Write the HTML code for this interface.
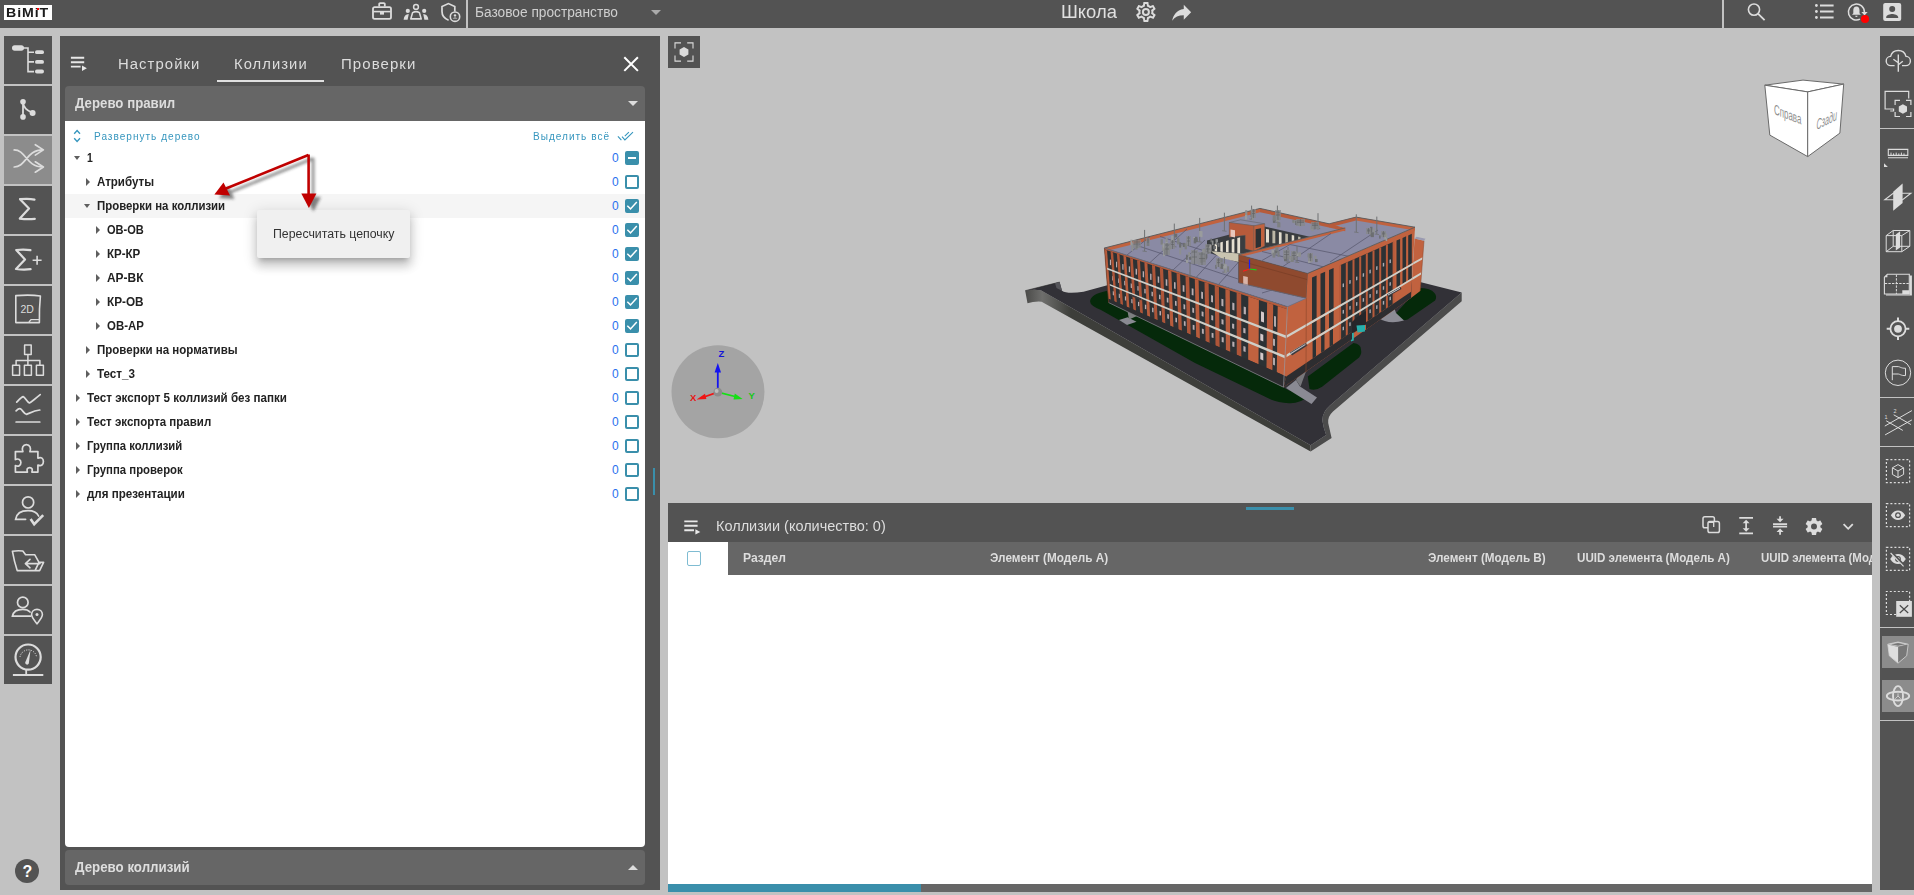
<!DOCTYPE html>
<html lang="ru">
<head>
<meta charset="utf-8">
<title>BiMiT — Школа</title>
<style>
*{box-sizing:border-box;margin:0;padding:0}
html,body{width:1914px;height:895px;overflow:hidden}
body{background:#c2c2c2;font-family:"Liberation Sans",sans-serif;position:relative;color:#ddd}
.abs{position:absolute}
.t{position:absolute;white-space:nowrap;line-height:1}
#hdr{position:absolute;left:0;top:0;width:1914px;height:28px;background:#535353}
#logo{position:absolute;left:4px;top:5px;width:48px;height:15px;background:#fff}
.vsep{position:absolute;top:0;width:2px;height:28px;background:#c2c2c2}
.sb{position:absolute;left:4px;width:48px;height:48px;background:#535353}
.sb.act{background:#8c8c8c}
.sb svg{position:absolute;left:0;top:0}
#lp{position:absolute;left:60px;top:36px;width:600px;height:854px;background:#535353}
.sech{position:absolute;left:5px;width:580px;height:35px;background:#666;border-radius:4px}
#tree{position:absolute;left:5px;top:85px;width:580px;height:726px;background:#fff;border-radius:0 0 4px 4px}
.row{position:absolute;left:0;width:580px;height:24px}
.row .lbl{position:absolute;top:6px;font-weight:bold;font-size:12px;line-height:12px;color:#222;white-space:nowrap}
.row .cnt{position:absolute;left:547px;top:5px;font-size:12px;line-height:14px;color:#2a70ee}
.cb{position:absolute;left:560px;top:5px;width:14px;height:14px;border:2px solid #3a8fab;border-radius:2px;background:#fff}
.cb.on{background:#3a8fab}
.cb svg{position:absolute;left:-2px;top:-2px}
.ar{position:absolute;width:0;height:0}
.ar.r{border-left:4.6px solid #5e5e5e;border-top:4.2px solid transparent;border-bottom:4.2px solid transparent;top:7.9px}
.ar.d{border-top:4.2px solid #5e5e5e;border-left:3.9px solid transparent;border-right:3.9px solid transparent;top:10.3px}
#bp{position:absolute;left:668px;top:503px;width:1204px;height:389px;background:#fff}
#bph{position:absolute;left:0;top:0;width:1204px;height:39px;background:#535353}
#bth{position:absolute;left:60px;top:39px;width:1144px;height:33px;background:#666;overflow:hidden}
#bth .t{font-weight:bold;font-size:12px;color:#ddd;top:10px}
#rs{position:absolute;left:1880px;top:36px;width:34px;height:854px;background:#535353}
.hsep{position:absolute;left:0;width:34px;height:1.2px;background:#c2c2c2}
.ract{position:absolute;left:2px;width:32px;height:32px;background:#8c8c8c}
</style>
</head>
<body>
<!-- HEADER -->
<div id="hdr">
  <div id="logo"><span class="t" id="logot" style="left:2.4px;top:1.6px;font-size:12.2px;font-weight:bold;color:#1c1c1c;letter-spacing:0.8px;transform:scaleX(1.162);transform-origin:0 0">BiMiT</span><div class="abs" style="left:32.5px;top:2.8px;width:2.6px;height:2.3px;background:#ff0000"></div></div>
  <div class="vsep" style="left:466px"></div>
  <span class="t" id="space" style="left:475.2px;top:5px;font-size:14px;color:#cfcfcf;transform:scaleX(0.9793);transform-origin:0 0">Базовое пространство</span>
  <div class="abs" style="left:651px;top:10px;width:0;height:0;border-top:5px solid #aaa;border-left:5px solid transparent;border-right:5px solid transparent"></div>
  <span class="t" id="proj" style="left:1060.8px;top:3px;font-size:18px;color:#e0e0e0;transform:scaleX(1.0223);transform-origin:0 0">Школа</span>
  <div class="vsep" style="left:1722px"></div>
  <svg class="abs" style="left:0;top:0" width="1914" height="28" viewBox="0 0 1914 28" fill="none" stroke="#dcdcdc">
    <!-- briefcase -->
    <rect x="373" y="7.2" width="18" height="11.6" rx="1.6" stroke-width="1.8"/><path d="M379.2 6.6 V4.2 A1 1 0 0 1 380.2 3.2 H383.8 A1 1 0 0 1 384.8 4.2 V6.6" stroke-width="1.8"/><path d="M373.4 11.6 H390.6" stroke-width="1.6"/><rect x="380" y="12" width="4" height="2.6" fill="#dcdcdc" stroke="none"/>
    <!-- people -->
    <circle cx="416" cy="6.9" r="2.4" stroke-width="1.5"/><path d="M410.8 18.9 L412.6 12.6 Q416 10.6 419.4 12.6 L421.2 18.9 Z" stroke-width="1.6" stroke-linejoin="round"/>
    <circle cx="407.8" cy="10.9" r="2.1" fill="#dcdcdc" stroke="none"/><circle cx="424.2" cy="10.9" r="2.1" fill="#dcdcdc" stroke="none"/>
    <path d="M403.6 19.7 Q404.2 14.4 408.8 14 L407.6 19.7 Z M428.4 19.7 Q427.8 14.4 423.2 14 L424.4 19.7 Z" fill="#dcdcdc" stroke="none"/>
    <!-- shield account -->
    <path d="M454.8 11.4 V6.6 L448.4 3.6 L442 6.6 V11.6 C442 15.6 444.6 18.8 448.6 20.2" stroke-width="1.7"/><circle cx="455" cy="16.7" r="4.7" stroke-width="1.6"/><circle cx="455" cy="15.4" r="1.2" fill="#dcdcdc" stroke="none"/><path d="M452.6 18.6 Q455 16.4 457.4 18.6 Z" fill="#dcdcdc" stroke="none"/>
    <!-- gear outline -->
    <g transform="translate(1133.9,-0.1)"><path fill="#dcdcdc" stroke="none" d="M12,8A4,4 0 0,1 16,12A4,4 0 0,1 12,16A4,4 0 0,1 8,12A4,4 0 0,1 12,8M12,10A2,2 0 0,0 10,12A2,2 0 0,0 12,14A2,2 0 0,0 14,12A2,2 0 0,0 12,10M10,22C9.75,22 9.54,21.82 9.5,21.58L9.13,18.93C8.5,18.68 7.96,18.34 7.44,17.94L4.95,18.95C4.73,19.03 4.46,18.95 4.34,18.73L2.34,15.27C2.21,15.05 2.27,14.78 2.46,14.63L4.57,12.97L4.5,12L4.57,11L2.46,9.37C2.27,9.22 2.21,8.95 2.34,8.73L4.34,5.27C4.46,5.05 4.73,4.96 4.95,5.05L7.44,6.05C7.96,5.66 8.5,5.32 9.13,5.07L9.5,2.42C9.54,2.18 9.75,2 10,2H14C14.25,2 14.46,2.18 14.5,2.42L14.87,5.07C15.5,5.32 16.04,5.66 16.56,6.05L19.05,5.05C19.27,4.96 19.54,5.05 19.66,5.27L21.66,8.73C21.79,8.95 21.73,9.22 21.54,9.37L19.43,11L19.5,12L19.43,13L21.54,14.63C21.73,14.78 21.79,15.05 21.66,15.27L19.66,18.73C19.54,18.95 19.27,19.04 19.05,18.95L16.56,17.95C16.04,18.34 15.5,18.68 14.87,18.93L14.5,21.58C14.46,21.82 14.25,22 14,22H10M11.25,4L10.88,6.61C9.68,6.86 8.62,7.5 7.85,8.39L5.44,7.35L4.69,8.65L6.8,10.2C6.4,11.37 6.4,12.64 6.8,13.8L4.68,15.36L5.43,16.66L7.86,15.62C8.63,16.5 9.68,17.14 10.87,17.38L11.24,20H12.76L13.13,17.39C14.32,17.14 15.37,16.5 16.14,15.62L18.57,16.66L19.32,15.36L17.2,13.81C17.6,12.64 17.6,11.37 17.2,10.2L19.31,8.65L18.56,7.35L16.15,8.39C15.38,7.5 14.32,6.86 13.12,6.62L12.75,4H11.25Z"/></g>
    <!-- share -->
    <g transform="translate(1169,-0.4) scale(1.055)"><path fill="#dcdcdc" stroke="none" d="M21,12L14,5V9C7,10 4,15 3,20C5.5,16.500 9,14.900 14,14.900V19L21,12Z"/></g>
    <!-- search -->
    <circle cx="1754" cy="9.6" r="5.6" stroke-width="1.6"/><path d="M1758.2 13.8 L1764.6 20.2" stroke-width="1.8"/>
    <!-- list -->
    <path d="M1820 5.5 H1833.6 M1820 11.5 H1833.6 M1820 17.5 H1833.6" stroke-width="2.1"/><circle cx="1816.4" cy="5.5" r="1.4" fill="#dcdcdc" stroke="none"/><circle cx="1816.4" cy="11.5" r="1.4" fill="#dcdcdc" stroke="none"/><circle cx="1816.4" cy="17.5" r="1.4" fill="#dcdcdc" stroke="none"/>
    <!-- bell circle -->
    <path d="M1864.4 12 A8 8 0 1 0 1860 19.2" stroke-width="1.5"/><path d="M1861.4 12 H1867.6 L1864.5 15.4 Z" fill="#dcdcdc" stroke="none"/>
    <path d="M1856.4 6.4 C1854.4 6.4 1853.3 8 1853.3 10.2 V13.2 L1852 14.8 H1860.8 L1859.5 13.2 V10.2 C1859.500 8 1858.400 6.400 1856.400 6.400 Z M1855.2 15.700 H1857.600 A1.200 1.200 0 0 1 1855.200 15.700 Z" fill="#dcdcdc" stroke="none"/>
    <circle cx="1865" cy="19" r="4.1" fill="#ff0000" stroke="none"/>
    <!-- account box -->
    <g transform="translate(1880.2,0)"><path fill="#dcdcdc" stroke="none" d="M6,17C6,15 10,13.900 12,13.900C14,13.900 18,15 18,17V18H6M15,9A3,3 0 0,1 12,12A3,3 0 0,1 9,9A3,3 0 0,1 12,6A3,3 0 0,1 15,9M3,5V19A2,2 0 0,0 5,21H19A2,2 0 0,0 21,19V5A2,2 0 0,0 19,3H5C3.890,3 3,3.900 3,5Z"/></g>
  </svg>
</div>

<!-- LEFT SIDEBAR -->
<div id="lsb">
<div class="sb" id="sb0" style="top:36px"><svg width="48" height="48" viewBox="0 0 48 48"><rect x="8" y="9.3" width="12" height="5.4" rx="2.7" fill="#dcdcdc"/><path d="M19 12 H24 V35.6 H30 M24 16.2 H30 M24 25.9 H30" fill="none" stroke="#dcdcdc" stroke-width="1.6"/><rect x="31" y="14.3" width="9" height="3.8" rx="1.9" fill="#dcdcdc"/><rect x="31" y="24" width="9" height="3.8" rx="1.9" fill="#dcdcdc"/><rect x="31" y="33.6" width="9" height="3.8" rx="1.9" fill="#dcdcdc"/></svg></div>
<div class="sb" id="sb1" style="top:86px"><svg width="48" height="48" viewBox="0 0 48 48"><path d="M19 15.7 V30.9 M19 15.7 C19 22 24 25 28.6 26.9" fill="none" stroke="#dcdcdc" stroke-width="1.8"/><circle cx="19" cy="15.7" r="2.8" fill="#dcdcdc"/><circle cx="19" cy="30.9" r="2.8" fill="#dcdcdc"/><circle cx="28.6" cy="26.9" r="3" fill="#dcdcdc"/></svg></div>
<div class="sb act" id="sb2" style="top:136px"><svg width="48" height="48" viewBox="0 0 48 48"><path d="M10.2 13.9 C22 13.9 22 31 39 31 M10.2 31 C22 31 22 13.9 39 13.9 M31.3 8.7 L39.4 13.9 L31.3 19.1 M31.3 25.8 L39.4 31 L31.3 36.2" fill="none" stroke="#dcdcdc" stroke-width="1.7" stroke-linecap="round" stroke-linejoin="round"/></svg></div>
<div class="sb" id="sb3" style="top:186px"><svg width="48" height="48" viewBox="0 0 48 48"><path d="M30.5 13.6 C26 12.6 20 12.8 16 13.2 L25 22.6 L15.8 32.6 C20 33.2 26 33.4 30.8 32.8" fill="none" stroke="#dcdcdc" stroke-width="2.2" stroke-linecap="round" stroke-linejoin="round"/></svg></div>
<div class="sb" id="sb4" style="top:236px"><svg width="48" height="48" viewBox="0 0 48 48"><path d="M26.4 14.2 C22 13.4 16 13.6 12.2 14 L21 23.4 L12 33 C16 33.6 22 33.8 26.6 33.2" fill="none" stroke="#dcdcdc" stroke-width="2.2" stroke-linecap="round" stroke-linejoin="round"/><path d="M28.6 24.2 H37.6 M33.1 19.7 V28.7" fill="none" stroke="#dcdcdc" stroke-width="1.6"/></svg></div>
<div class="sb" id="sb5" style="top:286px"><svg width="48" height="48" viewBox="0 0 48 48"><path d="M11.8 9.6 C20 9 30 9 36.4 10 C35.6 18 35.2 28 35.4 36.6 H11.8 Z" fill="none" stroke="#dcdcdc" stroke-width="1.6" stroke-linejoin="round"/><path d="M25 36 L27 33.6 H35" fill="none" stroke="#dcdcdc" stroke-width="1.4"/><text x="23.2" y="27" font-size="10.5" text-anchor="middle" fill="#dcdcdc" font-family="Liberation Sans, sans-serif">2D</text></svg></div>
<div class="sb" id="sb6" style="top:336px"><svg width="48" height="48" viewBox="0 0 48 48"><path d="M20.6 9 H27.2 V18.6 H20.6 Z M8.6 29.2 H15.6 V39.2 H8.6 Z M20.4 29.2 H27.4 V39.2 H20.4 Z M32.4 29.2 H39.4 V39.2 H32.4 Z M23.9 18.6 V29.2 M12.1 29.2 V24.4 H35.9 V29.2" fill="none" stroke="#dcdcdc" stroke-width="1.5" stroke-linejoin="round"/></svg></div>
<div class="sb" id="sb7" style="top:386px"><svg width="48" height="48" viewBox="0 0 48 48"><path d="M12.7 16.2 C15 14 17 11 19.2 10.6 C21 11 23 16 25.4 17 C29 15 33 11 36.2 8.6 M12.1 24.8 C14 23 15 22.4 16.4 22.8 C18.6 24 20 28 22.6 28.4 C26 27 30 24.6 35.8 24 M12.1 36 H35.8" fill="none" stroke="#dcdcdc" stroke-width="1.7" stroke-linecap="round" stroke-linejoin="round"/></svg></div>
<div class="sb" id="sb8" style="top:436px"><svg width="48" height="48" viewBox="0 0 48 48"><path d="M13 16 H20.5 C19 12.5 20.5 9 24 9 C27.5 9 29 12.5 27.5 16 H35.5 V22.5 C39 21 41 23 41 26 C41 29 39 31 35.5 29.5 V36.5 H29.5 C30.5 33.5 29.5 32 27.3 32 C25 32 24 33.5 25 36.5 H13 V30 C16 31.5 18.5 30 18.5 27 C18.5 24 16 22.5 13 24 Z" transform="translate(-1.6,-0.4)" fill="none" stroke="#dcdcdc" stroke-width="1.7" stroke-linejoin="round"/></svg></div>
<div class="sb" id="sb9" style="top:486px"><svg width="48" height="48" viewBox="0 0 48 48"><circle cx="24.1" cy="16.4" r="5.6" fill="none" stroke="#dcdcdc" stroke-width="1.7"/><path d="M21.6 33.3 H11.6 C12.5 27.5 17 24.6 24 24.6 C29 24.6 33 26.6 34.6 30" fill="none" stroke="#dcdcdc" stroke-width="1.7" stroke-linecap="round"/><path d="M26.6 33 L30.2 38.2 L39.2 29.2" fill="none" stroke="#dcdcdc" stroke-width="2.6"/></svg></div>
<div class="sb" id="sb10" style="top:536px"><svg width="48" height="48" viewBox="0 0 48 48"><path d="M8.4 15.2 C12 14.6 16 14.6 18.8 15 L21.6 18.8 H30.8 L35 26.4 H39.6 L35.6 34.6 H13.2 C11 28 9.4 21 8.4 15.2 Z M35 26.4 L31 34.6" fill="none" stroke="#dcdcdc" stroke-width="1.6" stroke-linejoin="round"/><path d="M36 27.6 H21.6 M26 23.4 L21.4 27.6 L26 31.8" fill="none" stroke="#dcdcdc" stroke-width="1.6" stroke-linecap="round" stroke-linejoin="round"/></svg></div>
<div class="sb" id="sb11" style="top:586px"><svg width="48" height="48" viewBox="0 0 48 48"><circle cx="18.8" cy="16.4" r="5.3" fill="none" stroke="#dcdcdc" stroke-width="1.7"/><path d="M26.4 30.2 H8.4 C9.4 25 13 23.4 18.8 23.4 C22 23.4 24.6 24.4 26 26" fill="none" stroke="#dcdcdc" stroke-width="1.7" stroke-linecap="round"/><path d="M33 37.8 C30 34 27.6 31.4 27.6 28.6 C27.6 25.6 30 23.4 33 23.4 C36 23.4 38.4 25.6 38.4 28.6 C38.4 31.4 36 34 33 37.8 Z" fill="none" stroke="#dcdcdc" stroke-width="1.6"/><circle cx="33" cy="28.6" r="1.5" fill="#dcdcdc"/></svg></div>
<div class="sb" id="sb12" style="top:636px"><svg width="48" height="48" viewBox="0 0 48 48"><circle cx="24.1" cy="21.1" r="12.6" fill="none" stroke="#dcdcdc" stroke-width="2.2"/><path d="M16 21 A8.4 8.4 0 0 1 32.6 21" fill="none" stroke="#dcdcdc" stroke-width="1" stroke-dasharray="1.2 1.2"/><path d="M26.6 13.6 L24.8 27.6 A1.9 1.9 0 0 1 21.2 26.6 Z" fill="#dcdcdc"/><path d="M22.2 33.4 V38.6 M8.9 39 H39.3" fill="none" stroke="#dcdcdc" stroke-width="1.8"/></svg></div>
</div>

<!-- LEFT PANEL -->
<div id="lp">
  <svg class="abs" style="left:0;top:0" width="600" height="50" viewBox="60 36 600 50" fill="none">
    <path d="M70.900 57.800 H84.200 M70.900 62.200 H84.200 M70.900 66.600 H80.600" stroke="#e8e8e8" stroke-width="1.9"/><path d="M82 65.600 L86.900 68.300 L82 71 Z" fill="#e8e8e8"/>
    <path d="M624.300 57.300 L637.900 70.900 M637.900 57.300 L624.300 70.900" stroke="#fff" stroke-width="2"/>
  </svg>
  <span class="t tab" id="tab1" style="left:58.10px;top:21.00px;font-size:14px;letter-spacing:1px;color:#ddd;transform:scaleX(1.0616);transform-origin:0 0">Настройки</span>
  <span class="t tab" id="tab2" style="left:173.80px;top:21.00px;font-size:14px;letter-spacing:1px;color:#ddd;transform:scaleX(1.0550);transform-origin:0 0">Коллизии</span>
  <span class="t tab" id="tab3" style="left:281.00px;top:21.00px;font-size:14px;letter-spacing:1px;color:#ddd;transform:scaleX(1.0706);transform-origin:0 0">Проверки</span>
  <div class="abs" style="left:157px;top:44px;width:107px;height:2px;background:#e0e0e0"></div>
  <div class="sech" style="top:50px;border-radius:4px 4px 0 0"><span class="t" id="sh1" style="left:10.20px;top:9.60px;font-size:14px;font-weight:bold;color:#ddd;transform:scaleX(0.9456);transform-origin:0 0">Дерево правил</span>
    <div class="abs" style="left:563px;top:15px;width:0;height:0;border-top:5px solid #ddd;border-left:5px solid transparent;border-right:5px solid transparent"></div></div>
  <div id="tree">
    <svg class="abs" style="left:0;top:0" width="580" height="30" viewBox="65 121 580 30" fill="none">
      <path d="M74.200 133.700 L77.100 130.600 L80 133.700 M74.200 138.300 L77.100 141.400 L80 138.300" stroke="#3696be" stroke-width="1.4"/>
      <path d="M617.900 136.300 L621.400 140.100 M622 136.600 L624.900 139.900 L633 132.200 M624.800 136.100 L628.900 132.200" stroke="#3696be" stroke-width="1.100"/>
    </svg>
    <span class="t" id="exp" style="left:28.5px;top:10.5px;font-size:10px;letter-spacing:1px;color:#3696be;transform:scaleX(1.0057);transform-origin:0 0">Развернуть дерево</span>
    <span class="t" id="selall" style="left:467.50px;top:10.5px;font-size:10px;letter-spacing:1px;color:#3696be;transform:scaleX(1.0042);transform-origin:0 0">Выделить всё</span>
    <div id="rows">
      <div class="row" style="top:25px"><div class="ar d" style="left:9.1px"></div><span class="lbl" id="r0" style="left:22.45px;transform:scaleX(0.8673);transform-origin:0 0">1</span><span class="cnt">0</span><div class="cb on"><svg width="14" height="14" viewBox="0 0 14 14"><path d="M3 7 H11" fill="none" stroke="#fff" stroke-width="2"/></svg></div></div>
      <div class="row" style="top:49px"><div class="ar r" style="left:21px"></div><span class="lbl" id="r1" style="left:31.65px;transform:scaleX(0.9613);transform-origin:0 0">Атрибуты</span><span class="cnt">0</span><div class="cb"></div></div>
      <div class="row" style="top:73px;background:#f5f5f5"><div class="ar d" style="left:19.1px"></div><span class="lbl" id="r2" style="left:32.15px;transform:scaleX(0.9510);transform-origin:0 0">Проверки на коллизии</span><span class="cnt">0</span><div class="cb on"><svg width="14" height="14" viewBox="0 0 14 14"><path d="M2.3 6.7 L5.5 9.9 L11.8 3.1" fill="none" stroke="#fff" stroke-width="1.5"/></svg></div></div>
      <div class="row" style="top:97px"><div class="ar r" style="left:31.2px"></div><span class="lbl" id="r3" style="left:41.55px;transform:scaleX(0.9200);transform-origin:0 0">ОВ-ОВ</span><span class="cnt">0</span><div class="cb on"><svg width="14" height="14" viewBox="0 0 14 14"><path d="M2.3 6.7 L5.5 9.9 L11.8 3.1" fill="none" stroke="#fff" stroke-width="1.5"/></svg></div></div>
      <div class="row" style="top:121px"><div class="ar r" style="left:31.2px"></div><span class="lbl" id="r4" style="left:41.55px;transform:scaleX(0.9609);transform-origin:0 0">КР-КР</span><span class="cnt">0</span><div class="cb on"><svg width="14" height="14" viewBox="0 0 14 14"><path d="M2.3 6.7 L5.5 9.9 L11.8 3.1" fill="none" stroke="#fff" stroke-width="1.5"/></svg></div></div>
      <div class="row" style="top:145px"><div class="ar r" style="left:31.2px"></div><span class="lbl" id="r5" style="left:41.55px;transform:scaleX(0.9930);transform-origin:0 0">АР-ВК</span><span class="cnt">0</span><div class="cb on"><svg width="14" height="14" viewBox="0 0 14 14"><path d="M2.3 6.7 L5.5 9.9 L11.8 3.1" fill="none" stroke="#fff" stroke-width="1.5"/></svg></div></div>
      <div class="row" style="top:169px"><div class="ar r" style="left:31.2px"></div><span class="lbl" id="r6" style="left:41.55px;transform:scaleX(0.9805);transform-origin:0 0">КР-ОВ</span><span class="cnt">0</span><div class="cb on"><svg width="14" height="14" viewBox="0 0 14 14"><path d="M2.3 6.7 L5.5 9.9 L11.8 3.1" fill="none" stroke="#fff" stroke-width="1.5"/></svg></div></div>
      <div class="row" style="top:193px"><div class="ar r" style="left:31.2px"></div><span class="lbl" id="r7" style="left:41.55px;transform:scaleX(0.9516);transform-origin:0 0">ОВ-АР</span><span class="cnt">0</span><div class="cb on"><svg width="14" height="14" viewBox="0 0 14 14"><path d="M2.3 6.7 L5.5 9.9 L11.8 3.1" fill="none" stroke="#fff" stroke-width="1.5"/></svg></div></div>
      <div class="row" style="top:217px"><div class="ar r" style="left:21px"></div><span class="lbl" id="r8" style="left:31.85px;transform:scaleX(0.9596);transform-origin:0 0">Проверки на нормативы</span><span class="cnt">0</span><div class="cb"></div></div>
      <div class="row" style="top:241px"><div class="ar r" style="left:21px"></div><span class="lbl" id="r9" style="left:31.85px;transform:scaleX(0.9705);transform-origin:0 0">Тест_3</span><span class="cnt">0</span><div class="cb"></div></div>
      <div class="row" style="top:265px"><div class="ar r" style="left:11px"></div><span class="lbl" id="r10" style="left:21.65px;transform:scaleX(0.9669);transform-origin:0 0">Тест экспорт 5 коллизий без папки</span><span class="cnt">0</span><div class="cb"></div></div>
      <div class="row" style="top:289px"><div class="ar r" style="left:11px"></div><span class="lbl" id="r11" style="left:21.65px;transform:scaleX(0.9587);transform-origin:0 0">Тест экспорта правил</span><span class="cnt">0</span><div class="cb"></div></div>
      <div class="row" style="top:313px"><div class="ar r" style="left:11px"></div><span class="lbl" id="r12" style="left:21.65px;transform:scaleX(0.9433);transform-origin:0 0">Группа коллизий</span><span class="cnt">0</span><div class="cb"></div></div>
      <div class="row" style="top:337px"><div class="ar r" style="left:11px"></div><span class="lbl" id="r13" style="left:21.65px;transform:scaleX(0.9459);transform-origin:0 0">Группа проверок</span><span class="cnt">0</span><div class="cb"></div></div>
      <div class="row" style="top:361px"><div class="ar r" style="left:11px"></div><span class="lbl" id="r14" style="left:21.65px;transform:scaleX(0.9659);transform-origin:0 0">для презентации</span><span class="cnt">0</span><div class="cb"></div></div>
    </div>
  </div>
  <div class="sech" style="top:814px"><span class="t" id="sh2" style="left:10.00px;top:10.00px;font-size:14px;font-weight:bold;color:#ddd;transform:scaleX(0.9502);transform-origin:0 0">Дерево коллизий</span>
    <div class="abs" style="left:563px;top:15px;width:0;height:0;border-bottom:5px solid #ddd;border-left:5px solid transparent;border-right:5px solid transparent"></div></div>
  <div class="abs" style="left:593px;top:432px;width:2px;height:27px;background:#3a8fab"></div>
</div>

<!-- VIEWPORT -->
<div id="vp" class="abs" style="left:668px;top:36px;width:1204px;height:467px;overflow:hidden">
  <svg class="abs" id="scene" style="left:0;top:0" width="1204" height="467" viewBox="668 36 1204 467">
<defs><linearGradient id="gEnd" x1="0" y1="0" x2="1" y2="0"><stop offset="0" stop-color="#4a4a48"/><stop offset="0.06" stop-color="#6e6e6c"/><stop offset="0.16" stop-color="#3d3e3a"/><stop offset="1" stop-color="#3d3e3a"/></linearGradient></defs>
<path d="M1025.2 290.7 Q1033 289 1040.8 290.3 L1310.6 445.2 L1310.6 451.6 L1041.6 301.7 Q1034 301.2 1027.5 303.3 Z" fill="url(#gEnd)"/>
<path d="M1310.6 445.2 L1326.2 435 L1323.9 428 L1322.3 420.2 Q1322.5 412 1330.2 405.3 L1461.7 292.4 L1461.7 301.3 L1333 411.5 Q1327.5 416.5 1328.2 423 L1331.6 438 L1310.6 451.6 Z" fill="#4b4b4b"/>
<path d="M1025.2 290.7 L1059.6 282.1 L1062 290.7 Q1067 294.2 1083.5 291.7 L1107.3 285.3 L1250 232 L1421 282.3 L1461.7 292.4 L1330.2 405.3 Q1322.5 412 1322.3 420.2 L1323.9 428 L1326.2 435 L1310.6 445.2 L1040.8 290.3 Q1033 289 1025.2 290.7 Z" fill="#323137"/>
<path d="M1025.2 290.7 L1059.6 282.1" stroke="#222" stroke-width="0.6" fill="none"/>
<path d="M1059.6 282.1 L1062 290.7 L1056.5 288 L1055 283.3 Z" fill="#55555a"/>
<path d="M1090.1 301.3 Q1090.5 294 1107.3 290.7 L1109 300.6 L1283.5 387.5 L1289 390.5 L1309 396 Q1300 403.8 1288.9 403.2 Q1275 402.5 1264.7 396.5 L1195 363 L1101 309.9 Q1090 305.500 1090.100 301.300 Z" fill="#05290a"/>
<path d="M1307.8 376.4 L1353.4 343.1 Q1361 344 1361 349.8 Q1362 354 1359.1 357.4 L1322.1 386.8 Q1316 391 1309.500 389 Z" fill="#05290a"/>
<path d="M1396.2 313 L1419 288 Q1431 288 1434.2 292.8 Q1437.500 296.500 1435.1 300.4 L1407.6 319.4 Q1401 321.500 1396.200 315.600 Z" fill="#05290a"/>
<polygon points="1286.0,388.0 1296.0,380.0 1300.0,386.5 1317.0,397.5 1311.5,404.0 1293.0,392.5" fill="#8a8a93"/>
<polygon points="1296.0,380.0 1305.0,360.0 1309.5,362.0 1300.5,386.5" fill="#77777b"/>
<path d="M1378 317.5 Q1388 325 1404 320.5 L1396 313 L1393 304 L1388.500 304.500 Z" fill="#8c8c95"/>
<polygon points="1119.0,320.0 1127.7,317.2 1136.5,321.8 1127.0,325.0" fill="#8a8a93"/>
<polygon points="1127.5,311.0 1135.5,307.5 1137.0,316.0 1129.0,319.5" fill="#7d7f80"/>
<polygon points="1104.4,248.0 1260.0,208.4 1329.1,223.8 1345.2,227.9 1238.6,254.7 1238.6,282.8 1306.3,298.2 1287.5,306.7" fill="#8a8aa4"/>
<polygon points="1104.4,248.0 1260.0,208.4 1260.0,212.2 1108.5,250.6" fill="#c1623f"/>
<path d="M1104.4 248.0 L1260.0 208.4" stroke="#5a5a5a" stroke-width="0.9" fill="none"/>
<polygon points="1260.0,208.4 1329.1,223.8 1329.1,227.6 1260.0,212.2" fill="#b75b3b"/>
<path d="M1260.0 208.4 L1329.1 223.8" stroke="#5a5a5a" stroke-width="0.9" fill="none"/>
<path d="M1131.0 243.5 L1238.0 279.0" stroke="#55556a" stroke-width="0.7" fill="none"/>
<path d="M1160.0 236.5 L1238.6 262.0" stroke="#55556a" stroke-width="0.7" fill="none"/>
<path d="M1150.0 262.5 L1187.0 229.0" stroke="#55556a" stroke-width="0.7" fill="none"/>
<path d="M1196.0 277.5 L1222.0 249.0" stroke="#55556a" stroke-width="0.7" fill="none"/>
<path d="M1127.0 255.0 L1150.0 236.5" stroke="#55556a" stroke-width="0.7" fill="none"/>
<path d="M1173.0 270.0 L1205.0 240.0" stroke="#55556a" stroke-width="0.7" fill="none"/>
<path d="M1218.0 285.0 L1238.6 262.0" stroke="#55556a" stroke-width="0.7" fill="none"/>
<path d="M1262.0 293.0 L1275.0 289.0" stroke="#55556a" stroke-width="0.7" fill="none"/>
<polygon points="1207.0,240.5 1243.0,231.0 1264.5,226.5 1313.0,237.5 1322.0,243.5 1276.0,258.0 1238.6,262.5 1207.0,252.0" fill="#3a3d40"/>
<polygon points="1211.0,251.3 1244.6,254.0 1238.6,262.0 1221.0,258.0" fill="#c9c4b0"/>
<polygon points="1209.0,245.4 1211.3,244.8 1211.3,251.1 1209.0,250.8" fill="#e6e0d2"/>
<polygon points="1214.7,243.9 1217.1,243.3 1217.1,251.5 1214.7,251.2" fill="#e6e0d2"/>
<polygon points="1220.3,242.4 1222.8,241.8 1222.8,251.9 1220.3,251.6" fill="#e6e0d2"/>
<polygon points="1226.0,240.9 1228.6,240.3 1228.6,252.3 1226.0,252.0" fill="#e6e0d2"/>
<polygon points="1231.7,239.4 1234.4,238.8 1234.4,252.8 1231.7,252.5" fill="#e6e0d2"/>
<polygon points="1237.3,237.9 1240.1,237.3 1240.1,253.2 1237.3,252.9" fill="#e6e0d2"/>
<polygon points="1266.0,229.0 1269.0,229.5 1269.0,242.5 1266.0,242.5" fill="#e3ddcf"/>
<polygon points="1272.4,230.5 1275.3,231.0 1275.3,243.3 1272.4,243.3" fill="#bdb7a6"/>
<polygon points="1278.9,232.0 1281.6,232.5 1281.6,244.1 1278.9,244.1" fill="#e3ddcf"/>
<polygon points="1285.3,233.5 1287.9,234.0 1287.9,244.9 1285.3,244.9" fill="#bdb7a6"/>
<polygon points="1291.7,235.0 1294.2,235.5 1294.2,245.6 1291.7,245.6" fill="#e3ddcf"/>
<polygon points="1298.1,236.5 1300.5,237.0 1300.5,246.4 1298.1,246.4" fill="#bdb7a6"/>
<polygon points="1304.6,238.0 1306.8,238.5 1306.8,247.2 1304.6,247.2" fill="#e3ddcf"/>
<polygon points="1229.2,222.5 1240.6,219.8 1264.7,223.8 1254.0,225.8" fill="#8a8aa4" stroke="#5a5a5a" stroke-width="0.5"/>
<polygon points="1229.2,222.5 1254.0,225.8 1254.0,251.3 1245.2,248.8 1245.2,235.2 1229.2,237.2" fill="#b75b3b" stroke="#5a5a5a" stroke-width="0.4"/>
<polygon points="1254.0,225.8 1264.7,223.8 1264.7,246.0 1254.0,251.5" fill="#c1623f" stroke="#5a5a5a" stroke-width="0.4"/>
<polygon points="1255.6,229.2 1261.0,228.2 1261.0,246.5 1255.6,248.2" fill="#2c3134"/>
<polygon points="1230.5,229.5 1235.0,230.2 1235.0,237.5 1230.5,236.5" fill="#e8c7bd"/>
<polygon points="1238.6,254.7 1307.7,273.4 1415.0,227.2 1356.0,217.1 1329.1,223.8 1345.2,227.9" fill="#8a8aa4"/>
<polygon points="1356.0,217.1 1415.0,227.2 1415.0,230.6 1356.0,220.6" fill="#c1623f"/>
<polygon points="1329.1,223.8 1356.0,217.1 1356.0,220.6 1329.1,227.4" fill="#b75b3b"/>
<polygon points="1345.2,227.9 1329.1,223.8 1329.1,227.4 1345.2,231.3" fill="#b75b3b"/>
<polygon points="1238.6,254.7 1345.2,227.9 1345.2,230.4 1240.5,257.0" fill="#c1623f"/>
<path d="M1238.6 254.7 L1345.2 227.9" stroke="#5a5a5a" stroke-width="0.8" fill="none"/>
<path d="M1356.0 217.1 L1415.0 227.2" stroke="#5a5a5a" stroke-width="0.9" fill="none"/>
<path d="M1329.1 223.8 L1356.0 217.1" stroke="#5a5a5a" stroke-width="0.8" fill="none"/>
<path d="M1262.0 251.5 L1330.0 268.5" stroke="#55556a" stroke-width="0.7" fill="none"/>
<path d="M1290.0 244.5 L1357.0 258.0" stroke="#55556a" stroke-width="0.7" fill="none"/>
<path d="M1283.0 266.5 L1331.0 233.5" stroke="#55556a" stroke-width="0.7" fill="none"/>
<path d="M1330.0 262.0 L1378.0 230.0" stroke="#55556a" stroke-width="0.7" fill="none"/>
<path d="M1262.0 260.5 L1290.0 244.5" stroke="#55556a" stroke-width="0.7" fill="none"/>
<polygon points="1238.6,254.7 1307.7,273.4 1306.3,298.2 1238.6,282.8" fill="#8f4a2f" stroke="#5a5a5a" stroke-width="0.5"/>
<path d="M1238.6 260.5 L1307.4 279.6" stroke="#6e3822" stroke-width="0.5" fill="none"/>
<polygon points="1243.2,276.0 1247.8,277.0 1247.8,285.5 1243.2,284.5" fill="#d9b3a8"/>
<path d="M1238.6 282.8 L1306.3 298.2" stroke="#6c6c80" stroke-width="0.6" fill="none"/>
<polygon points="1287.5,306.7 1306.3,298.2 1307.7,273.4 1415.0,227.2 1411.0,298.0 1283.5,387.2" fill="#c1623f"/>
<polygon points="1340.0,265.3 1393.5,241.8 1393.5,303.6 1340.0,339.9" fill="#2c3134"/>
<polygon points="1339.1,265.7 1341.1,264.8 1341.1,339.2 1339.1,340.5" fill="#b75b3b"/>
<polygon points="1345.8,262.8 1347.8,261.9 1347.8,334.6 1345.8,336.0" fill="#b75b3b"/>
<polygon points="1352.5,259.8 1354.5,258.9 1354.5,330.1 1352.5,331.5" fill="#b75b3b"/>
<polygon points="1359.2,256.9 1361.2,256.0 1361.2,325.6 1359.2,326.9" fill="#b75b3b"/>
<polygon points="1365.8,254.0 1367.8,253.1 1367.8,321.0 1365.8,322.4" fill="#b75b3b"/>
<polygon points="1372.5,251.0 1374.5,250.2 1374.5,316.5 1372.5,317.9" fill="#b75b3b"/>
<polygon points="1379.2,248.1 1381.2,247.2 1381.2,312.0 1379.2,313.3" fill="#b75b3b"/>
<polygon points="1385.9,245.2 1387.9,244.3 1387.9,307.4 1385.9,308.8" fill="#b75b3b"/>
<polygon points="1392.6,242.2 1394.6,241.4 1394.6,302.9 1392.6,304.2" fill="#b75b3b"/>
<polygon points="1312.0,277.6 1316.6,275.6 1316.6,318.1 1312.0,320.8" fill="#2c3134"/>
<polygon points="1312.0,323.2 1316.6,320.5 1316.6,336.2 1312.0,339.0" fill="#2c3134"/>
<polygon points="1312.6,341.1 1316.0,339.0 1316.0,356.2 1312.6,358.5" fill="#2c3134"/>
<polygon points="1320.5,273.8 1325.1,271.8 1325.1,313.2 1320.5,315.9" fill="#2c3134"/>
<polygon points="1320.5,318.2 1325.1,315.6 1325.1,331.0 1320.5,333.8" fill="#2c3134"/>
<polygon points="1321.1,335.8 1324.5,333.7 1324.5,350.4 1321.1,352.7" fill="#2c3134"/>
<polygon points="1329.0,270.1 1333.6,268.1 1333.6,308.3 1329.0,311.0" fill="#2c3134"/>
<polygon points="1329.0,313.3 1333.6,310.6 1333.6,325.8 1329.0,328.7" fill="#2c3134"/>
<polygon points="1329.6,330.6 1333.0,328.5 1333.0,344.7 1329.6,347.0" fill="#2c3134"/>
<polygon points="1396.5,240.5 1400.1,238.9 1400.1,270.1 1396.5,272.1" fill="#2c3134"/>
<polygon points="1396.5,274.1 1400.1,272.1 1400.1,285.3 1396.5,287.5" fill="#2c3134"/>
<polygon points="1402.5,237.9 1406.1,236.3 1406.1,266.6 1402.5,268.7" fill="#2c3134"/>
<polygon points="1402.5,270.7 1406.1,268.6 1406.1,281.6 1402.5,283.8" fill="#2c3134"/>
<polygon points="1408.2,235.4 1411.8,233.8 1411.8,263.3 1408.2,265.4" fill="#2c3134"/>
<polygon points="1408.2,267.4 1411.8,265.3 1411.8,278.2 1408.2,280.4" fill="#2c3134"/>
<polygon points="1342.6,283.7 1344.0,283.3 1344.0,286.9 1342.6,287.3" fill="#a9abb3"/>
<polygon points="1342.6,310.2 1344.0,309.8 1344.0,313.4 1342.6,313.8" fill="#a9abb3"/>
<polygon points="1342.6,326.9 1344.0,326.5 1344.0,330.1 1342.6,330.5" fill="#a9abb3"/>
<polygon points="1349.3,280.3 1350.7,279.9 1350.7,283.5 1349.3,283.9" fill="#a9abb3"/>
<polygon points="1349.3,306.2 1350.7,305.8 1350.7,309.4 1349.3,309.8" fill="#a9abb3"/>
<polygon points="1349.3,322.6 1350.7,322.2 1350.7,325.8 1349.3,326.2" fill="#a9abb3"/>
<polygon points="1356.0,276.8 1357.4,276.4 1357.4,280.0 1356.0,280.4" fill="#a9abb3"/>
<polygon points="1356.0,302.3 1357.4,301.9 1357.4,305.5 1356.0,305.9" fill="#a9abb3"/>
<polygon points="1356.0,318.3 1357.4,317.9 1357.4,321.5 1356.0,321.9" fill="#a9abb3"/>
<polygon points="1362.7,273.4 1364.1,273.0 1364.1,276.6 1362.7,277.0" fill="#a9abb3"/>
<polygon points="1362.7,298.3 1364.1,297.9 1364.1,301.5 1362.7,301.9" fill="#a9abb3"/>
<polygon points="1362.7,314.0 1364.1,313.6 1364.1,317.2 1362.7,317.6" fill="#a9abb3"/>
<polygon points="1369.4,270.0 1370.8,269.6 1370.8,273.2 1369.4,273.6" fill="#a9abb3"/>
<polygon points="1369.4,294.3 1370.8,293.9 1370.8,297.5 1369.4,297.9" fill="#a9abb3"/>
<polygon points="1369.4,309.7 1370.8,309.3 1370.8,312.9 1369.4,313.3" fill="#a9abb3"/>
<polygon points="1376.1,266.5 1377.5,266.1 1377.5,269.7 1376.1,270.1" fill="#a9abb3"/>
<polygon points="1376.1,290.4 1377.5,290.0 1377.5,293.6 1376.1,294.0" fill="#a9abb3"/>
<polygon points="1376.1,305.5 1377.5,305.1 1377.5,308.7 1376.1,309.1" fill="#a9abb3"/>
<polygon points="1382.8,263.1 1384.2,262.7 1384.2,266.3 1382.8,266.7" fill="#a9abb3"/>
<polygon points="1382.8,286.4 1384.2,286.0 1384.2,289.6 1382.8,290.0" fill="#a9abb3"/>
<polygon points="1382.8,301.2 1384.2,300.8 1384.2,304.4 1382.8,304.8" fill="#a9abb3"/>
<polygon points="1389.5,259.7 1390.9,259.3 1390.9,262.9 1389.5,263.3" fill="#a9abb3"/>
<polygon points="1389.5,282.4 1390.9,282.0 1390.9,285.6 1389.5,286.0" fill="#a9abb3"/>
<polygon points="1389.5,296.9 1390.9,296.5 1390.9,300.1 1389.5,300.5" fill="#a9abb3"/>
<polygon points="1352.0,334.0 1366.0,324.5 1366.0,311.0 1356.5,317.5 1352.0,322.0" fill="#26262a"/>
<polygon points="1356.5,325.5 1365.0,325.0 1365.0,331.5 1357.5,332.5" fill="#27b0ac"/>
<polygon points="1351.0,333.5 1353.8,332.5 1353.8,340.5 1351.0,341.5" fill="#27b0ac"/>
<polygon points="1286.2,376.4 1352.0,331.8 1352.0,339.3 1283.5,387.2" fill="#2d2d30"/>
<polygon points="1366.0,322.3 1411.4,291.5 1411.0,298.0 1366.0,329.5" fill="#2d2d30"/>
<polygon points="1286.2,335.6 1413.4,262.4 1413.3,264.4 1286.1,338.2" fill="#cfcfc8"/>
<polygon points="1284.8,355.6 1412.4,277.8 1412.3,279.8 1284.7,358.2" fill="#cfcfc8"/>
<polygon points="1290.0,352.5 1305.5,343.0 1307.5,345.5 1292.0,355.5" fill="#3a3a3e"/>
<polygon points="1290.5,353.0 1305.5,343.8 1305.5,345.0 1290.5,354.5" fill="#b8b8c0"/>
<polygon points="1387.0,294.5 1400.5,287.0 1401.5,289.0 1388.0,296.5" fill="#38383c"/>
<polygon points="1388.0,294.4 1400.0,287.8 1400.0,288.8 1388.0,295.4" fill="#c8c8d0"/>
<path d="M1307.7 273.4 L1415.0 227.2" stroke="#5a5a5a" stroke-width="0.9" fill="none"/>
<path d="M1287.5 306.7 L1306.3 298.2" stroke="#77778a" stroke-width="0.8" fill="none"/>
<path d="M1306.3 298.2 L1306.0 372.0" stroke="#8a4429" stroke-width="0.6" fill="none"/>
<polygon points="1414.6,238.6 1424.0,240.8 1420.2,291.0 1411.0,298.0" fill="#c1623f"/>
<polygon points="1414.6,238.6 1416.5,236.8 1425.5,238.8 1424.0,240.8" fill="#9a9ab0"/>
<polygon points="1413.3,262.2 1422.5,257.2 1422.3,259.6 1413.2,264.6" fill="#cfcfc8"/>
<polygon points="1412.3,277.6 1421.3,272.2 1421.1,274.6 1412.2,280.0" fill="#cfcfc8"/>
<path d="M1424.0 240.8 L1420.2 291.0" stroke="#8a4429" stroke-width="0.5" fill="none"/>
<polygon points="1104.4,248.0 1287.5,306.7 1283.5,387.2 1108.6,302.6" fill="#2c3134"/>
<polygon points="1104.4,248.0 1287.5,306.7 1287.4,309.2 1104.6,249.6" fill="#b75b3b"/>
<polygon points="1104.6,249.6 1107.0,250.4 1110.8,299.8 1108.5,298.8" fill="#b85c3c"/>
<polygon points="1109.9,259.5 1111.0,259.8 1111.0,265.3 1109.9,265.0" fill="#b9aeb2"/>
<polygon points="1112.1,276.0 1113.2,276.3 1113.2,280.7 1112.1,280.3" fill="#b9aeb2"/>
<polygon points="1112.8,291.1 1114.0,291.4 1114.0,295.4 1112.8,295.1" fill="#b9aeb2"/>
<polygon points="1110.6,251.6 1113.1,252.4 1116.8,302.4 1114.4,301.4" fill="#ae5538"/>
<polygon points="1116.0,261.6 1117.1,262.0 1117.1,267.6 1116.0,267.2" fill="#b9aeb2"/>
<polygon points="1118.1,278.3 1119.2,278.7 1119.2,283.1 1118.1,282.7" fill="#b9aeb2"/>
<polygon points="1118.8,293.6 1119.9,293.9 1119.9,298.0 1118.8,297.7" fill="#b9aeb2"/>
<polygon points="1116.9,253.6 1119.5,254.4 1123.0,305.1 1120.5,304.0" fill="#ae5538"/>
<polygon points="1122.3,263.9 1123.5,264.2 1123.5,269.9 1122.3,269.5" fill="#b9aeb2"/>
<polygon points="1124.2,280.8 1125.5,281.1 1125.5,285.6 1124.2,285.2" fill="#b9aeb2"/>
<polygon points="1124.9,296.2 1126.2,296.6 1126.2,300.7 1124.9,300.3" fill="#b9aeb2"/>
<polygon points="1123.4,255.7 1126.1,256.6 1129.4,307.9 1126.8,306.8" fill="#b85c3c"/>
<polygon points="1128.8,266.2 1130.1,266.5 1130.1,272.3 1128.8,271.9" fill="#b9aeb2"/>
<polygon points="1130.7,283.3 1132.0,283.7 1132.0,288.2 1130.7,287.8" fill="#b9aeb2"/>
<polygon points="1131.3,298.9 1132.6,299.3 1132.6,303.4 1131.3,303.1" fill="#b9aeb2"/>
<polygon points="1130.1,257.9 1132.9,258.8 1136.0,310.8 1133.3,309.6" fill="#ae5538"/>
<polygon points="1135.6,268.6 1137.0,269.0 1137.0,274.8 1135.6,274.4" fill="#b9aeb2"/>
<polygon points="1137.4,285.9 1138.7,286.3 1138.7,290.8 1137.4,290.4" fill="#b9aeb2"/>
<polygon points="1138.0,301.7 1139.3,302.1 1139.3,306.3 1138.0,305.9" fill="#b9aeb2"/>
<polygon points="1137.1,260.2 1140.0,261.1 1142.9,313.8 1140.1,312.6" fill="#ae5538"/>
<polygon points="1142.7,271.0 1144.1,271.5 1144.1,277.4 1142.7,277.0" fill="#b9aeb2"/>
<polygon points="1144.3,288.7 1145.7,289.1 1145.7,293.6 1144.3,293.2" fill="#b9aeb2"/>
<polygon points="1144.9,304.6 1146.3,305.0 1146.3,309.3 1144.9,308.9" fill="#b9aeb2"/>
<polygon points="1144.4,262.6 1147.4,263.5 1150.1,317.0 1147.2,315.7" fill="#b85c3c"/>
<polygon points="1150.1,273.6 1151.5,274.1 1151.5,280.1 1150.1,279.7" fill="#b9aeb2"/>
<polygon points="1151.5,291.5 1152.9,292.0 1152.9,296.5 1151.5,296.1" fill="#b9aeb2"/>
<polygon points="1152.1,307.6 1153.5,308.1 1153.5,312.4 1152.1,312.0" fill="#b9aeb2"/>
<polygon points="1152.0,265.0 1155.1,266.1 1157.6,320.2 1154.5,318.9" fill="#ae5538"/>
<polygon points="1157.7,276.3 1159.2,276.8 1159.2,282.9 1157.7,282.5" fill="#b9aeb2"/>
<polygon points="1159.0,294.5 1160.5,294.9 1160.5,299.5 1159.0,299.1" fill="#b9aeb2"/>
<polygon points="1159.5,310.8 1161.0,311.2 1161.0,315.6 1159.5,315.2" fill="#b9aeb2"/>
<polygon points="1159.8,267.6 1163.1,268.7 1165.3,323.6 1162.2,322.2" fill="#ae5538"/>
<polygon points="1165.7,279.1 1167.3,279.6 1167.3,285.9 1165.7,285.4" fill="#b9aeb2"/>
<polygon points="1166.8,297.6 1168.4,298.0 1168.4,302.7 1166.8,302.2" fill="#b9aeb2"/>
<polygon points="1167.3,314.0 1168.9,314.5 1168.9,319.0 1167.3,318.5" fill="#b9aeb2"/>
<polygon points="1168.0,270.3 1171.4,271.4 1173.4,327.2 1170.2,325.7" fill="#b85c3c"/>
<polygon points="1174.0,282.0 1175.6,282.5 1175.6,288.9 1174.0,288.4" fill="#b9aeb2"/>
<polygon points="1175.0,300.8 1176.6,301.3 1176.6,306.0 1175.0,305.5" fill="#b9aeb2"/>
<polygon points="1175.4,317.5 1177.0,318.0 1177.0,322.5 1175.4,322.0" fill="#b9aeb2"/>
<polygon points="1176.6,273.1 1180.1,274.2 1181.9,330.8 1178.5,329.4" fill="#ae5538"/>
<polygon points="1182.7,285.1 1184.4,285.6 1184.4,292.1 1182.7,291.6" fill="#b9aeb2"/>
<polygon points="1183.5,304.1 1185.2,304.7 1185.2,309.4 1183.5,308.9" fill="#b9aeb2"/>
<polygon points="1183.9,321.0 1185.6,321.5 1185.6,326.2 1183.9,325.6" fill="#b9aeb2"/>
<polygon points="1185.5,276.0 1189.2,277.2 1190.7,334.7 1187.1,333.1" fill="#ae5538"/>
<polygon points="1191.7,288.3 1193.5,288.8 1193.5,295.4 1191.7,294.9" fill="#b9aeb2"/>
<polygon points="1192.3,307.6 1194.1,308.2 1194.1,312.9 1192.3,312.4" fill="#b9aeb2"/>
<polygon points="1192.7,324.7 1194.5,325.3 1194.5,330.0 1192.7,329.4" fill="#b9aeb2"/>
<polygon points="1194.8,279.0 1198.6,280.3 1199.9,338.7 1196.2,337.1" fill="#b85c3c"/>
<polygon points="1201.2,291.6 1203.0,292.2 1203.0,298.9 1201.2,298.4" fill="#b9aeb2"/>
<polygon points="1201.6,311.3 1203.5,311.9 1203.5,316.7 1201.6,316.1" fill="#b9aeb2"/>
<polygon points="1201.9,328.6 1203.8,329.2 1203.8,334.0 1201.9,333.4" fill="#b9aeb2"/>
<polygon points="1204.5,282.2 1208.6,283.5 1209.6,342.9 1205.6,341.2" fill="#ae5538"/>
<polygon points="1211.1,295.1 1213.0,295.7 1213.0,302.6 1211.1,302.0" fill="#b9aeb2"/>
<polygon points="1211.3,315.1 1213.2,315.7 1213.2,320.6 1211.3,320.0" fill="#b9aeb2"/>
<polygon points="1211.6,332.7 1213.5,333.3 1213.5,338.1 1211.6,337.6" fill="#b9aeb2"/>
<polygon points="1214.7,285.5 1218.9,286.9 1219.6,347.3 1215.5,345.5" fill="#ae5538"/>
<polygon points="1221.4,298.7 1223.4,299.3 1223.4,306.4 1221.4,305.8" fill="#b9aeb2"/>
<polygon points="1221.5,319.1 1223.5,319.7 1223.5,324.7 1221.5,324.1" fill="#b9aeb2"/>
<polygon points="1221.7,337.0 1223.7,337.6 1223.7,342.5 1221.7,341.9" fill="#b9aeb2"/>
<polygon points="1225.4,289.0 1229.8,290.4 1230.2,352.0 1225.9,350.1" fill="#b85c3c"/>
<polygon points="1232.3,302.5 1234.4,303.2 1234.4,310.4 1232.3,309.7" fill="#b9aeb2"/>
<polygon points="1232.1,323.4 1234.2,324.0 1234.2,328.9 1232.1,328.3" fill="#b9aeb2"/>
<polygon points="1232.3,341.4 1234.4,342.1 1234.4,347.1 1232.3,346.5" fill="#b9aeb2"/>
<polygon points="1236.6,292.6 1241.2,294.1 1241.3,356.8 1236.8,354.8" fill="#ae5538"/>
<polygon points="1243.7,306.6 1245.9,307.2 1245.9,314.6 1243.7,313.9" fill="#b9aeb2"/>
<polygon points="1243.3,327.8 1245.5,328.4 1245.5,333.4 1243.3,332.8" fill="#b9aeb2"/>
<polygon points="1243.4,346.1 1245.6,346.8 1245.6,351.9 1243.4,351.2" fill="#b9aeb2"/>
<polygon points="1248.3,296.5 1258.9,299.9 1258.5,364.3 1248.2,359.8" fill="#c1623f"/>
<polygon points="1267.1,302.6 1273.2,304.6 1272.4,370.4 1266.5,367.8" fill="#b75b3b"/>
<polygon points="1277.7,306.0 1287.4,309.2 1286.2,376.4 1276.8,372.3" fill="#c1623f"/>
<polygon points="1261.0,311.3 1264.0,312.5 1264.0,322.6 1261.0,321.4" fill="#d4c8ca"/>
<polygon points="1260.3,333.5 1263.3,334.7 1263.3,341.5 1260.3,340.3" fill="#d4c8ca"/>
<polygon points="1260.3,352.3 1263.3,353.5 1263.3,360.5 1260.3,359.3" fill="#d4c8ca"/>
<polygon points="1274.2,315.9 1275.8,316.5 1275.8,326.9 1274.2,326.2" fill="#d4c8ca"/>
<polygon points="1273.2,338.6 1274.8,339.2 1274.8,346.1 1273.2,345.5" fill="#d4c8ca"/>
<polygon points="1273.2,357.6 1274.8,358.3 1274.8,365.4 1273.2,364.8" fill="#d4c8ca"/>
<polygon points="1108.5,298.8 1286.2,376.4 1283.5,387.2 1108.6,302.6" fill="#2d2d30"/>
<path d="M1108.6 302.6 L1283.5 387.2" stroke="#8d8d92" stroke-width="0.7" fill="none"/>
<polygon points="1107.1,267.8 1286.2,335.6 1286.1,338.2 1107.2,269.4" fill="#cfcfc8"/>
<polygon points="1109.7,283.9 1284.8,355.6 1284.7,358.2 1109.8,285.5" fill="#cfcfc8"/>
<path d="M1104.4 248.0 L1287.5 306.7" stroke="#6a6a78" stroke-width="1.0" fill="none"/>
<path d="M1287.5 306.7 L1283.5 387.2" stroke="#9a9aa0" stroke-width="0.7" fill="none"/>
<path d="M1104.4 248.0 L1108.6 302.6" stroke="#7a3c25" stroke-width="0.6" fill="none"/>
<polygon points="1130.5,294.0 1141.5,298.6 1141.5,300.4 1130.5,295.8" fill="#3a3a3e"/>
<path d="M1144.6 229.9 L1144.6 251.0" stroke="#6f7172" stroke-width="1.0" fill="none"/>
<path d="M1142.4 251.0 L1146.8 251.6" stroke="#6f7172" stroke-width="0.8" fill="none"/>
<path d="M1174.3 223.6 L1174.3 246.3" stroke="#6f7172" stroke-width="1.0" fill="none"/>
<path d="M1172.1 246.3 L1176.5 246.9" stroke="#6f7172" stroke-width="0.8" fill="none"/>
<path d="M1199.7 217.9 L1199.7 241.6" stroke="#6f7172" stroke-width="1.0" fill="none"/>
<path d="M1197.5 241.6 L1201.9 242.2" stroke="#6f7172" stroke-width="0.8" fill="none"/>
<path d="M1224.4 212.7 L1224.4 230.7" stroke="#6f7172" stroke-width="1.0" fill="none"/>
<path d="M1222.2 230.7 L1226.6 231.3" stroke="#6f7172" stroke-width="0.8" fill="none"/>
<path d="M1251.6 205.6 L1251.6 219.0" stroke="#6f7172" stroke-width="1.0" fill="none"/>
<path d="M1249.4 219.0 L1253.8 219.6" stroke="#6f7172" stroke-width="0.8" fill="none"/>
<path d="M1277.4 205.6 L1277.4 222.0" stroke="#6f7172" stroke-width="1.0" fill="none"/>
<path d="M1275.2 222.0 L1279.6 222.6" stroke="#6f7172" stroke-width="0.8" fill="none"/>
<path d="M1318.0 213.2 L1318.0 228.0" stroke="#6f7172" stroke-width="1.0" fill="none"/>
<path d="M1315.8 228.0 L1320.2 228.6" stroke="#6f7172" stroke-width="0.8" fill="none"/>
<path d="M1356.3 214.3 L1356.3 232.0" stroke="#6f7172" stroke-width="1.0" fill="none"/>
<path d="M1354.1 232.0 L1358.5 232.6" stroke="#6f7172" stroke-width="0.8" fill="none"/>
<path d="M1376.8 216.6 L1376.8 234.0" stroke="#6f7172" stroke-width="1.0" fill="none"/>
<path d="M1374.6 234.0 L1379.0 234.6" stroke="#6f7172" stroke-width="0.8" fill="none"/>
<path d="M1190.0 262.0 L1190.0 276.0" stroke="#6f7172" stroke-width="1.0" fill="none"/>
<path d="M1187.8 276.0 L1192.2 276.6" stroke="#6f7172" stroke-width="0.8" fill="none"/>
<path d="M1224.4 257.0 L1224.4 272.0" stroke="#6f7172" stroke-width="1.0" fill="none"/>
<path d="M1222.2 272.0 L1226.6 272.6" stroke="#6f7172" stroke-width="0.8" fill="none"/>
<path d="M1288.0 247.0 L1288.0 262.0" stroke="#6f7172" stroke-width="1.0" fill="none"/>
<path d="M1285.8 262.0 L1290.2 262.6" stroke="#6f7172" stroke-width="0.8" fill="none"/>
<path d="M1297.0 246.0 L1297.0 262.0" stroke="#6f7172" stroke-width="1.0" fill="none"/>
<path d="M1294.8 262.0 L1299.2 262.6" stroke="#6f7172" stroke-width="0.8" fill="none"/>
<rect x="1134.8" y="243.8" width="2.8" height="5.8" fill="#7e8081"/>
<rect x="1137.0" y="245.7" width="1.8" height="2.7" fill="#8d8f90"/>
<rect x="1131.2" y="242.4" width="1.8" height="4.4" fill="#8d8f90"/>
<rect x="1130.4" y="239.7" width="1.9" height="5.7" fill="#9a9c9d"/>
<rect x="1131.7" y="244.8" width="1.6" height="4.7" fill="#8d8f90"/>
<rect x="1131.6" y="246.0" width="1.4" height="5.2" fill="#8d8f90"/>
<rect x="1167.9" y="245.6" width="3.1" height="4.4" fill="#8d8f90"/>
<rect x="1163.1" y="250.3" width="1.8" height="5.9" fill="#9a9c9d"/>
<rect x="1164.0" y="246.9" width="1.7" height="3.0" fill="#7e8081"/>
<rect x="1163.9" y="249.7" width="2.5" height="4.6" fill="#6c6e70"/>
<rect x="1162.1" y="245.9" width="2.0" height="4.9" fill="#8d8f90"/>
<rect x="1165.6" y="248.2" width="1.5" height="5.9" fill="#7e8081"/>
<rect x="1165.5" y="239.7" width="2.1" height="4.4" fill="#9a9c9d"/>
<rect x="1161.2" y="242.3" width="1.4" height="2.7" fill="#8d8f90"/>
<rect x="1163.2" y="245.0" width="1.6" height="3.4" fill="#9a9c9d"/>
<rect x="1160.6" y="239.2" width="2.3" height="5.2" fill="#7e8081"/>
<rect x="1162.7" y="243.5" width="2.1" height="3.5" fill="#9a9c9d"/>
<rect x="1165.6" y="237.4" width="2.0" height="4.6" fill="#8d8f90"/>
<rect x="1195.3" y="238.5" width="2.4" height="3.6" fill="#6c6e70"/>
<rect x="1195.0" y="236.8" width="2.5" height="5.0" fill="#6c6e70"/>
<rect x="1201.0" y="231.2" width="1.5" height="6.0" fill="#9a9c9d"/>
<rect x="1193.0" y="237.1" width="2.0" height="3.4" fill="#9a9c9d"/>
<rect x="1193.7" y="238.1" width="2.5" height="5.3" fill="#6c6e70"/>
<rect x="1199.1" y="231.0" width="2.7" height="5.8" fill="#9a9c9d"/>
<rect x="1186.0" y="254.7" width="1.7" height="5.5" fill="#6c6e70"/>
<rect x="1185.9" y="259.8" width="2.5" height="3.1" fill="#9a9c9d"/>
<rect x="1192.7" y="257.8" width="2.0" height="3.5" fill="#9a9c9d"/>
<rect x="1188.2" y="252.2" width="2.1" height="6.0" fill="#8d8f90"/>
<rect x="1190.0" y="256.6" width="2.0" height="2.8" fill="#6c6e70"/>
<rect x="1189.0" y="257.0" width="2.3" height="2.7" fill="#6c6e70"/>
<rect x="1202.7" y="258.3" width="2.8" height="3.8" fill="#6c6e70"/>
<rect x="1203.6" y="254.5" width="3.2" height="5.0" fill="#6c6e70"/>
<rect x="1203.0" y="257.3" width="1.4" height="4.4" fill="#6c6e70"/>
<rect x="1200.1" y="255.0" width="1.9" height="4.3" fill="#6c6e70"/>
<rect x="1199.9" y="257.4" width="2.7" height="5.4" fill="#6c6e70"/>
<rect x="1204.4" y="254.2" width="3.0" height="4.1" fill="#6c6e70"/>
<rect x="1208.5" y="248.6" width="2.4" height="3.1" fill="#6c6e70"/>
<rect x="1208.2" y="247.3" width="2.6" height="5.0" fill="#9a9c9d"/>
<rect x="1202.2" y="249.8" width="2.4" height="4.8" fill="#9a9c9d"/>
<rect x="1202.9" y="248.7" width="3.0" height="3.4" fill="#7e8081"/>
<rect x="1202.3" y="249.1" width="2.5" height="3.1" fill="#8d8f90"/>
<rect x="1205.9" y="244.7" width="2.2" height="3.3" fill="#7e8081"/>
<rect x="1219.7" y="258.4" width="3.1" height="4.2" fill="#7e8081"/>
<rect x="1216.1" y="261.0" width="2.6" height="2.8" fill="#8d8f90"/>
<rect x="1215.3" y="264.9" width="1.4" height="3.9" fill="#6c6e70"/>
<rect x="1219.6" y="264.3" width="2.6" height="4.4" fill="#7e8081"/>
<rect x="1217.5" y="259.9" width="1.9" height="4.3" fill="#6c6e70"/>
<rect x="1220.7" y="263.5" width="2.2" height="5.3" fill="#6c6e70"/>
<rect x="1223.1" y="263.4" width="2.1" height="4.2" fill="#8d8f90"/>
<rect x="1227.1" y="266.3" width="2.0" height="5.6" fill="#7e8081"/>
<rect x="1221.9" y="264.6" width="3.0" height="4.4" fill="#6c6e70"/>
<rect x="1224.4" y="269.3" width="2.1" height="4.0" fill="#8d8f90"/>
<rect x="1223.0" y="266.1" width="2.7" height="3.8" fill="#8d8f90"/>
<rect x="1223.6" y="264.2" width="3.2" height="4.2" fill="#9a9c9d"/>
<rect x="1179.2" y="248.7" width="2.0" height="5.8" fill="#8d8f90"/>
<rect x="1182.6" y="242.9" width="2.5" height="4.1" fill="#6c6e70"/>
<rect x="1179.3" y="243.0" width="2.1" height="4.2" fill="#6c6e70"/>
<rect x="1181.2" y="245.7" width="1.5" height="4.2" fill="#8d8f90"/>
<rect x="1184.6" y="243.3" width="2.3" height="6.0" fill="#7e8081"/>
<rect x="1179.2" y="242.5" width="1.9" height="5.0" fill="#6c6e70"/>
<rect x="1250.8" y="208.8" width="2.0" height="4.9" fill="#8d8f90"/>
<rect x="1245.2" y="210.2" width="2.2" height="5.7" fill="#8d8f90"/>
<rect x="1245.0" y="215.0" width="2.2" height="4.5" fill="#9a9c9d"/>
<rect x="1251.7" y="215.3" width="2.3" height="4.9" fill="#8d8f90"/>
<rect x="1251.8" y="212.9" width="2.8" height="3.6" fill="#7e8081"/>
<rect x="1250.6" y="211.8" width="1.9" height="5.2" fill="#6c6e70"/>
<rect x="1272.9" y="218.7" width="2.4" height="4.2" fill="#6c6e70"/>
<rect x="1276.1" y="219.1" width="2.4" height="2.7" fill="#8d8f90"/>
<rect x="1274.4" y="214.8" width="1.5" height="5.8" fill="#6c6e70"/>
<rect x="1277.2" y="222.4" width="3.2" height="5.0" fill="#7e8081"/>
<rect x="1272.7" y="215.3" width="2.5" height="5.4" fill="#7e8081"/>
<rect x="1277.7" y="215.2" width="1.9" height="5.7" fill="#8d8f90"/>
<rect x="1293.0" y="220.5" width="2.8" height="2.7" fill="#8d8f90"/>
<rect x="1292.3" y="219.9" width="2.1" height="2.8" fill="#7e8081"/>
<rect x="1296.5" y="219.0" width="2.1" height="4.7" fill="#7e8081"/>
<rect x="1295.2" y="220.8" width="2.5" height="4.2" fill="#6c6e70"/>
<rect x="1299.4" y="219.3" width="1.9" height="4.5" fill="#6c6e70"/>
<rect x="1299.0" y="223.1" width="2.5" height="3.4" fill="#8d8f90"/>
<rect x="1311.4" y="228.1" width="2.3" height="3.0" fill="#8d8f90"/>
<rect x="1316.4" y="225.7" width="2.1" height="3.0" fill="#7e8081"/>
<rect x="1314.4" y="222.9" width="2.6" height="2.8" fill="#7e8081"/>
<rect x="1313.5" y="225.2" width="2.1" height="4.1" fill="#6c6e70"/>
<rect x="1310.2" y="225.9" width="2.4" height="3.8" fill="#8d8f90"/>
<rect x="1316.6" y="224.5" width="2.8" height="5.1" fill="#7e8081"/>
<rect x="1290.3" y="258.7" width="2.9" height="3.0" fill="#9a9c9d"/>
<rect x="1285.8" y="254.5" width="2.0" height="4.6" fill="#6c6e70"/>
<rect x="1289.0" y="256.0" width="2.7" height="3.8" fill="#6c6e70"/>
<rect x="1289.0" y="256.2" width="2.9" height="4.3" fill="#8d8f90"/>
<rect x="1289.1" y="256.8" width="1.6" height="2.6" fill="#8d8f90"/>
<rect x="1284.0" y="256.4" width="3.1" height="4.8" fill="#6c6e70"/>
<rect x="1271.5" y="250.0" width="3.0" height="4.7" fill="#9a9c9d"/>
<rect x="1274.7" y="249.9" width="1.7" height="4.8" fill="#7e8081"/>
<rect x="1274.5" y="250.2" width="3.0" height="3.0" fill="#6c6e70"/>
<rect x="1272.5" y="252.7" width="2.8" height="4.9" fill="#7e8081"/>
<rect x="1275.3" y="247.0" width="3.1" height="3.8" fill="#7e8081"/>
<rect x="1277.4" y="251.1" width="2.2" height="5.8" fill="#7e8081"/>
<rect x="1314.2" y="255.8" width="2.2" height="3.3" fill="#8d8f90"/>
<rect x="1308.1" y="258.2" width="2.4" height="4.8" fill="#9a9c9d"/>
<rect x="1315.0" y="259.0" width="2.6" height="3.1" fill="#6c6e70"/>
<rect x="1309.9" y="259.2" width="2.7" height="3.1" fill="#8d8f90"/>
<rect x="1309.7" y="254.3" width="1.5" height="4.6" fill="#6c6e70"/>
<rect x="1307.6" y="253.4" width="2.8" height="3.9" fill="#7e8081"/>
<rect x="1290.8" y="257.4" width="2.9" height="4.5" fill="#7e8081"/>
<rect x="1296.3" y="253.5" width="2.8" height="2.8" fill="#9a9c9d"/>
<rect x="1291.7" y="253.0" width="1.5" height="3.9" fill="#7e8081"/>
<rect x="1291.3" y="257.3" width="2.2" height="4.7" fill="#7e8081"/>
<rect x="1298.3" y="252.2" width="2.7" height="4.7" fill="#8d8f90"/>
<rect x="1295.3" y="252.2" width="2.0" height="2.9" fill="#8d8f90"/>
<rect x="1370.7" y="233.9" width="1.8" height="2.6" fill="#6c6e70"/>
<rect x="1369.7" y="230.5" width="2.1" height="4.7" fill="#7e8081"/>
<rect x="1373.0" y="228.1" width="2.2" height="5.4" fill="#8d8f90"/>
<rect x="1370.1" y="226.8" width="2.3" height="5.2" fill="#6c6e70"/>
<rect x="1372.5" y="229.4" width="1.6" height="2.8" fill="#8d8f90"/>
<rect x="1370.8" y="232.3" width="3.1" height="4.8" fill="#6c6e70"/>
<rect x="1379.1" y="235.4" width="1.5" height="3.2" fill="#6c6e70"/>
<rect x="1385.7" y="235.9" width="1.5" height="5.2" fill="#9a9c9d"/>
<rect x="1383.9" y="233.5" width="3.0" height="4.8" fill="#8d8f90"/>
<rect x="1382.6" y="232.5" width="2.9" height="4.8" fill="#7e8081"/>
<rect x="1384.3" y="234.3" width="1.9" height="5.3" fill="#9a9c9d"/>
<rect x="1382.9" y="232.5" width="2.0" height="3.0" fill="#9a9c9d"/>
<rect x="1215.7" y="239.7" width="1.5" height="5.2" fill="#7e8081"/>
<rect x="1210.4" y="238.5" width="1.6" height="3.8" fill="#6c6e70"/>
<rect x="1217.7" y="242.9" width="1.8" height="4.0" fill="#6c6e70"/>
<rect x="1211.8" y="240.5" width="1.7" height="4.7" fill="#8d8f90"/>
<rect x="1215.6" y="239.2" width="2.4" height="3.1" fill="#8d8f90"/>
<rect x="1213.2" y="246.1" width="2.8" height="2.9" fill="#6c6e70"/>
<rect x="1174.3" y="234.3" width="2.5" height="3.1" fill="#7e8081"/>
<rect x="1177.0" y="238.5" width="2.4" height="5.9" fill="#7e8081"/>
<rect x="1171.8" y="239.2" width="2.2" height="2.7" fill="#7e8081"/>
<rect x="1171.1" y="235.8" width="2.3" height="5.6" fill="#9a9c9d"/>
<rect x="1174.3" y="233.8" width="2.9" height="3.6" fill="#6c6e70"/>
<rect x="1177.1" y="237.6" width="2.1" height="5.3" fill="#7e8081"/>
<rect x="1133" y="240" width="8" height="8" fill="#85878a" opacity="0.75"/>
<path d="M1134 242 H1140 M1134 244.0 H1140 M1137.0 240 V248" stroke="#5f6163" stroke-width="0.6" fill="none"/>
<rect x="1164" y="243" width="6" height="12" fill="#85878a" opacity="0.75"/>
<path d="M1165 245 H1169 M1165 249.0 H1169 M1167.0 243 V255" stroke="#5f6163" stroke-width="0.6" fill="none"/>
<rect x="1170" y="240" width="5" height="9" fill="#85878a" opacity="0.75"/>
<path d="M1171 242 H1174 M1171 244.5 H1174 M1172.5 240 V249" stroke="#5f6163" stroke-width="0.6" fill="none"/>
<rect x="1191" y="250" width="7" height="14" fill="#85878a" opacity="0.75"/>
<path d="M1192 252 H1197 M1192 257.0 H1197 M1194.5 250 V264" stroke="#5f6163" stroke-width="0.6" fill="none"/>
<rect x="1198" y="252" width="8" height="13" fill="#85878a" opacity="0.75"/>
<path d="M1199 254 H1205 M1199 258.5 H1205 M1202.0 252 V265" stroke="#5f6163" stroke-width="0.6" fill="none"/>
<rect x="1186" y="236" width="5" height="10" fill="#85878a" opacity="0.75"/>
<path d="M1187 238 H1190 M1187 241.0 H1190 M1188.5 236 V246" stroke="#5f6163" stroke-width="0.6" fill="none"/>
<rect x="1205" y="244" width="6" height="10" fill="#85878a" opacity="0.75"/>
<path d="M1206 246 H1210 M1206 249.0 H1210 M1208.0 244 V254" stroke="#5f6163" stroke-width="0.6" fill="none"/>
<rect x="1216" y="258" width="5" height="9" fill="#85878a" opacity="0.75"/>
<path d="M1217 260 H1220 M1217 262.5 H1220 M1218.5 258 V267" stroke="#5f6163" stroke-width="0.6" fill="none"/>
<rect x="1146" y="238" width="4" height="8" fill="#85878a" opacity="0.75"/>
<path d="M1147 240 H1149 M1147 242.0 H1149 M1148.0 238 V246" stroke="#5f6163" stroke-width="0.6" fill="none"/>
<rect x="1251" y="209" width="5" height="9" fill="#85878a" opacity="0.75"/>
<path d="M1252 211 H1255 M1252 213.5 H1255 M1253.5 209 V218" stroke="#5f6163" stroke-width="0.6" fill="none"/>
<rect x="1275" y="210" width="6" height="10" fill="#85878a" opacity="0.75"/>
<path d="M1276 212 H1280 M1276 215.0 H1280 M1278.0 210 V220" stroke="#5f6163" stroke-width="0.6" fill="none"/>
<rect x="1296" y="219" width="9" height="7" fill="#85878a" opacity="0.75"/>
<path d="M1297 221 H1304 M1297 222.5 H1304 M1300.5 219 V226" stroke="#5f6163" stroke-width="0.6" fill="none"/>
<rect x="1311" y="222" width="8" height="7" fill="#85878a" opacity="0.75"/>
<path d="M1312 224 H1318 M1312 225.5 H1318 M1315.0 222 V229" stroke="#5f6163" stroke-width="0.6" fill="none"/>
<rect x="1283" y="250" width="7" height="9" fill="#85878a" opacity="0.75"/>
<path d="M1284 252 H1289 M1284 254.5 H1289 M1286.5 250 V259" stroke="#5f6163" stroke-width="0.6" fill="none"/>
<rect x="1291" y="251" width="6" height="9" fill="#85878a" opacity="0.75"/>
<path d="M1292 253 H1296 M1292 255.5 H1296 M1294.0 251 V260" stroke="#5f6163" stroke-width="0.6" fill="none"/>
<rect x="1308" y="253" width="5" height="8" fill="#85878a" opacity="0.75"/>
<path d="M1309 255 H1312 M1309 257.0 H1312 M1310.5 253 V261" stroke="#5f6163" stroke-width="0.6" fill="none"/>
<rect x="1366" y="228" width="5" height="6" fill="#85878a" opacity="0.75"/>
<path d="M1367 230 H1370 M1367 231.0 H1370 M1368.5 228 V234" stroke="#5f6163" stroke-width="0.6" fill="none"/>
<rect x="1381" y="231" width="5" height="6" fill="#85878a" opacity="0.75"/>
<path d="M1382 233 H1385 M1382 234.0 H1385 M1383.5 231 V237" stroke="#5f6163" stroke-width="0.6" fill="none"/>
<path d="M1249.5 269.0 L1249.5 259.5" stroke="#1a1aff" stroke-width="1.2" fill="none"/>
<path d="M1249.5 269.0 L1243.0 271.2" stroke="#ff1a1a" stroke-width="1.2" fill="none"/>
<path d="M1249.5 269.0 L1256.5 269.8" stroke="#19d419" stroke-width="1.2" fill="none"/>
<!-- view cube -->
<g stroke="#6a6a6a" stroke-width="1" stroke-linejoin="round">
<polygon points="1764.8,85.2 1803,80.1 1843.7,84.1 1807.7,91.9" fill="#fff"/>
<polygon points="1764.8,85.2 1807.7,91.9 1807.7,156.6 1769.8,135.1" fill="#fff"/>
<polygon points="1807.7,91.9 1843.7,84.1 1839.9,133.1 1807.7,156.6" fill="#fff"/>
</g>
<text transform="translate(1774,114) skewY(21) scale(0.86,1.55)" font-family="Liberation Sans, sans-serif" font-size="9.2" fill="#8e8e8e">Справа</text>
<text transform="translate(1816.5,130) skewY(-27) scale(0.78,1.6)" font-family="Liberation Sans, sans-serif" font-size="9.2" font-style="italic" fill="#8e8e8e">Сзади</text>
<!-- axis gizmo -->
<circle cx="718" cy="391.8" r="46.5" fill="#a4a4a4"/>
<path d="M717.8 392 V370" stroke="#1414f0" stroke-width="1.8"/><path d="M717.8 363 L721 372.5 H714.600 Z" fill="#1414f0"/>
<path d="M717.8 392.2 L704 397" stroke="#f01414" stroke-width="1.8"/><path d="M696.6 399.600 L705 393.800 L706.400 399 Z" fill="#f01414"/>
<path d="M717.8 392.2 L735 396.5" stroke="#14e014" stroke-width="1.8"/><path d="M742.600 399 L733.500 399.600 L734.800 393.400 Z" fill="#14e014"/>
<circle cx="717.8" cy="392.200" r="4.4" fill="#8c8c8c"/><circle cx="716.600" cy="391" r="2" fill="#bdbdbd"/>
<text x="718.4" y="356.6" font-family="Liberation Sans, sans-serif" font-size="9.500" font-weight="bold" fill="#1414d8">Z</text>
<text x="690" y="401" font-family="Liberation Sans, sans-serif" font-size="9.500" font-weight="bold" fill="#e81414">X</text>
<text x="748.600" y="399.400" font-family="Liberation Sans, sans-serif" font-size="9.500" font-weight="bold" fill="#14c814">Y</text>
</svg>
  <div class="abs" style="left:0;top:0;width:32px;height:32px;background:#535353"></div>
  <svg class="abs" style="left:0;top:0" width="32" height="32" viewBox="668 36 32 32" fill="none"><path d="M675 48.600 V42.900 H681 M687.200 42.900 H693 V48.600 M693 55.400 V61.100 H687.200 M681 61.100 H675 V55.400" stroke="#dcdcdc" stroke-width="1.100"/><path d="M684 46.900 L688.400 49.450 V54.550 L684 57.100 L679.600 54.550 V49.450 Z" fill="#dcdcdc"/></svg>
</div>

<!-- BOTTOM PANEL -->
<div id="bp">
  <div id="bph">
    <div class="abs" style="left:578px;top:4px;width:48px;height:3px;background:#3a8fab"></div>
    <svg class="abs" style="left:0;top:0" width="1204" height="39" viewBox="668 503 1204 39" fill="none">
    <path d="M684.300 521.400 H697.600 M684.300 525.800 H697.600 M684.300 530.200 H694" stroke="#e8e8e8" stroke-width="1.9"/><path d="M695.400 529.200 L700.300 531.900 L695.400 534.600 Z" fill="#e8e8e8"/>
    <rect x="1703" y="516.800" width="11.400" height="11" rx="1.800" stroke="#dcdcdc" stroke-width="1.500"/><rect x="1708" y="521.600" width="11.400" height="11" rx="1.800" fill="#535353" stroke="#dcdcdc" stroke-width="1.500"/><path d="M1708.700 522.300 H1713.700 V527.100" stroke="#dcdcdc" stroke-width="1.300"/>
    <g transform="translate(1735.800,515.400) scale(0.860)"><path fill="#dcdcdc" d="M13,9V15H16L12,19L8,15H11V9H8L12,5L16,9H13M4,2H20V4H4V2M4,20H20V22H4V20Z"/></g>
    <g transform="translate(1769.500,515.300) scale(0.880)"><path fill="#dcdcdc" d="M4,12H20V14H4V12M4,9H20V11H4V9M16,4L12,8L8,4H11V1H13V4H16M8,19L12,15L16,19H13V22H11V19H8Z"/></g>
    <g transform="translate(1803.800,516.300) scale(0.850)"><path fill="#dcdcdc" d="M12,15.500A3.500,3.500 0 0,1 8.500,12A3.500,3.500 0 0,1 12,8.500A3.500,3.500 0 0,1 15.500,12A3.500,3.500 0 0,1 12,15.500M19.430,12.970C19.470,12.650 19.500,12.330 19.500,12C19.500,11.670 19.470,11.340 19.430,11L21.540,9.370C21.730,9.220 21.780,8.950 21.660,8.730L19.660,5.270C19.540,5.050 19.270,4.960 19.050,5.050L16.560,6.050C16.040,5.660 15.500,5.320 14.870,5.070L14.500,2.420C14.460,2.180 14.250,2 14,2H10C9.750,2 9.540,2.180 9.500,2.420L9.130,5.070C8.500,5.320 7.960,5.660 7.440,6.050L4.950,5.050C4.730,4.960 4.460,5.050 4.340,5.270L2.340,8.730C2.210,8.950 2.270,9.220 2.460,9.370L4.570,11C4.530,11.340 4.500,11.670 4.500,12C4.500,12.330 4.530,12.650 4.570,12.970L2.460,14.630C2.270,14.780 2.210,15.050 2.340,15.270L4.340,18.730C4.460,18.950 4.730,19.030 4.950,18.950L7.440,17.940C7.960,18.340 8.500,18.680 9.130,18.930L9.500,21.580C9.540,21.820 9.750,22 10,22H14C14.250,22 14.460,21.820 14.500,21.580L14.870,18.930C15.500,18.670 16.040,18.340 16.560,17.940L19.050,18.950C19.270,19.030 19.540,18.950 19.660,18.730L21.660,15.270C21.780,15.050 21.730,14.780 21.540,14.630L19.430,12.970Z"/></g>
    <path d="M1843.600 524.200 L1848.200 528.800 L1852.800 524.200" stroke="#dcdcdc" stroke-width="1.800"/>
  </svg>
    <span class="t" id="bpt" style="left:47.6px;top:16px;font-size:14.5px;color:#ddd;transform:scaleX(0.9995);transform-origin:0 0">Коллизии (количество: 0)</span>
  </div>
  <div class="abs" style="left:18.7px;top:48.2px;width:14.6px;height:14.6px;border:1.4px solid #7fbcd2;border-radius:2px;background:#fff"></div>
  <div id="bth">
    <span class="t" id="c1" style="left:15.3px;transform:scaleX(1.0106);transform-origin:0 0">Раздел</span>
    <span class="t" id="c2" style="left:262.4px;transform:scaleX(0.9793);transform-origin:0 0">Элемент (Модель А)</span>
    <span class="t" id="c3" style="left:700.0px;transform:scaleX(0.9751);transform-origin:0 0">Элемент (Модель В)</span>
    <span class="t" id="c4" style="left:848.6px;transform:scaleX(0.9667);transform-origin:0 0">UUID элемента (Модель А)</span>
    <span class="t" id="c5" style="left:1032.6px;transform:scaleX(0.9550);transform-origin:0 0">UUID элемента (Модель В)</span>
  </div>
  <div class="abs" style="left:0;top:381px;width:1204px;height:8px;background:#666"></div>
  <div class="abs" style="left:0;top:381px;width:253px;height:8px;background:#3a8fab"></div>
</div>

<!-- RIGHT SIDEBAR -->
<div id="rs">
  <div class="hsep" style="top:92px"></div>
  <div class="hsep" style="top:361px"></div>
  <div class="hsep" style="top:410px"></div>
  <div class="hsep" style="top:591px"></div>
  <div class="hsep" style="top:684px"></div>
  <div class="ract" style="top:600px"></div>
  <div class="ract" style="top:644px"></div>
  <svg class="abs" style="left:0;top:0" width="34" height="854" viewBox="0 0 34 854" fill="none" stroke="#dcdcdc" stroke-width="1.3">
    <!-- cloud tree -->
    <path d="M14.6 29.6 H11 A4.6 4.6 0 0 1 10.6 20.4 A8 8 0 0 1 26 20.4 A4.6 4.6 0 0 1 25.6 29.6 H22" stroke-width="1.4"/>
    <path d="M18.3 18.4 V35.8 M13.4 23.2 L18.3 26.8 M22.8 25.2 L18.3 28.8" stroke-width="1.4"/>
    <!-- screen focus -->
    <path d="M28.7 62.6 V55.3 H5.1 V73 H13.6 V75 H10.2" stroke-width="1.2"/>
    <path d="M15.1 69 V64.4 H20 M26 64.4 H30.9 V69 M30.9 76 V80.5 H26 M20 80.5 H15.1 V76" stroke-width="1.2"/>
    <path d="M22.9 68.2 L27 70.6 V75.4 L22.9 77.8 L18.8 75.4 V70.6 Z" fill="#dcdcdc" stroke="none"/>
    <!-- ruler -->
    <path d="M8.3 113.4 H27.8 V119.4 H8.3 Z M8 121.8 H28" stroke-width="1.1"/>
    <path d="M11 119 V116.6 M13.6 119 V117.4 M16.2 119 V116.6 M18.8 119 V117.4 M21.4 119 V116.6 M24 119 V117.4" stroke-width="1"/>
    <path d="M4 127.2 L7.9 131 H4 Z" fill="#dcdcdc" stroke="none"/>
    <!-- section planes -->
    <path d="M13.2 155.8 L22.6 147.4 V167 L13.2 174.8 Z" fill="#dcdcdc" stroke="none"/>
    <path d="M13.2 157.3 H30.9 L22.6 163.7 H4.8 Z" stroke-width="1.1"/>
    <!-- box section -->
    <path d="M6.2 199.6 H21.8 V215.7 H6.2 Z M13.2 194.5 H29.8 V210.3 H13.2 Z M6.2 199.6 L13.2 194.5 M21.8 199.6 L29.8 194.5 M21.8 215.7 L29.8 210.3 M6.2 215.7 L13.2 210.3" stroke-width="1"/>
    <path d="M15.8 198.6 L20.1 195.3 V211.4 L15.8 214.6 Z" fill="#dcdcdc" stroke="none"/>
    <!-- plan sheet -->
    <path d="M7.4 238.2 H29.3 V258 H4.4 V241.2 Z" stroke-width="1.1"/>
    <path d="M29.9 239.6 H31.9 V259.6 H6 V258.4 H29.9 Z M4.4 241.2 H7.4 V238.2 Z M22.3 254.3 H29.3 V258 H22.3 Z" fill="#dcdcdc" stroke="none"/>
    <path d="M16.4 238.6 V258 M4.8 247.5 H29" stroke-width="1" stroke-dasharray="2.4 1.2"/>
    <!-- gps -->
    <circle cx="18" cy="292.8" r="7.6" stroke-width="1.8"/><circle cx="18" cy="292.8" r="3.9" fill="#dcdcdc" stroke="none"/>
    <path d="M18 281.5 V285 M18 300.6 V304.1 M6.7 292.8 H10.2 M25.8 292.8 H29.3" stroke-width="2"/>
    <!-- flag circle -->
    <circle cx="18" cy="336.8" r="12.7" stroke-width="1"/>
    <path d="M12.3 344.2 V330.6 H18 C20 330.6 21 332.4 25.5 332.2 V339.6 C21 339.8 20 338 18 338 H12.3" stroke-width="1"/>
    <!-- grid lines -->
    <path d="M4.8 390.1 L31.9 374.6 M5.1 398.9 L31.9 383.9 M6.2 384.8 L22.8 394.4 M13.7 378.8 L30.9 388.5" stroke-width="1"/>
    <text x="4.6" y="383" font-size="5.5" fill="#dcdcdc" stroke="none" font-family="Liberation Sans, sans-serif">1</text>
    <text x="13.6" y="377.4" font-size="5.5" fill="#dcdcdc" stroke="none" font-family="Liberation Sans, sans-serif">2</text>
    <!-- dashed cube -->
    <rect x="6.4" y="423.6" width="23.2" height="23" stroke-width="1.2" stroke-dasharray="2 2"/>
    <path d="M18 428.6 L23.6 431.8 V438.4 L18 441.6 L12.4 438.4 V431.8 Z M12.4 431.8 L18 435 L23.6 431.8 M18 435 V441.6" stroke-width="1"/>
    <!-- dashed eye -->
    <rect x="6.4" y="467.7" width="23.2" height="23" stroke-width="1.2" stroke-dasharray="2 2"/>
    <path d="M10.8 479.2 C13 475.6 15.4 474.4 18 474.4 C20.6 474.4 23 475.6 25.2 479.2 C23 482.8 20.6 484 18 484 C15.4 484 13 482.8 10.8 479.2 Z" fill="#dcdcdc" stroke="none"/>
    <circle cx="18" cy="479.2" r="2.9" fill="#535353" stroke="none"/><circle cx="18" cy="479.2" r="1.6" fill="#dcdcdc" stroke="none"/>
    <!-- dashed eye off -->
    <rect x="6.4" y="511.4" width="23.2" height="23" stroke-width="1.2" stroke-dasharray="2 2"/>
    <path d="M10.2 523 C12.6 519.2 15.2 518 18 518 C20.8 518 23.4 519.2 25.8 523 C23.4 526.8 20.8 528 18 528 C15.2 528 12.6 526.8 10.2 523 Z" fill="#dcdcdc" stroke="none"/>
    <circle cx="18" cy="523" r="2.9" fill="#535353" stroke="none"/><circle cx="18.4" cy="522.4" r="1.2" fill="#dcdcdc" stroke="none"/>
    <path d="M11.4 516.4 L24.4 529.8" stroke="#535353" stroke-width="2.6"/><path d="M10.6 517 L23.6 530.4" stroke-width="1.1"/>
    <!-- dashed box x -->
    <path d="M16 578.5 H6.4 V555.5 H29.6 V565" stroke-width="1.2" stroke-dasharray="2 2"/>
    <rect x="16.2" y="565" width="15.7" height="15.8" fill="#dcdcdc" stroke="none"/>
    <path d="M19.8 569.2 L28.2 577 M28.2 569.2 L19.8 577" stroke="#4a4a4a" stroke-width="1.2"/>
    <!-- 3d cube (active) -->
    <path d="M7.8 608.2 L18 606 L28.2 608.2 L18 610.6 Z" fill="#c9c9c9" stroke="none"/>
    <path d="M11 608.3 L18 607 L25 608.3 L18 609.8 Z" fill="#777" stroke="none"/>
    <path d="M7.8 608.6 L18 611 V627 L9.4 619.8 Z" fill="#dedede" stroke="none"/>
    <path d="M18.6 611 L28.2 608.6 L26.6 619.6 L18.6 626.6 Z" fill="#787878" stroke="none"/>
    <path d="M7.8 608.2 L18 606 L28.2 608.2 L26.7 619.8 L18 627.2 L9.3 619.8 Z" stroke="#d6d6d6" stroke-width="0.8"/>
    <!-- orbit (active) -->
    <ellipse cx="18" cy="660.1" rx="11.2" ry="4.4" stroke-width="1.9"/><ellipse cx="18" cy="660.1" rx="5" ry="10" stroke-width="1.9"/>
    <path d="M18 657.4 V660 L15.2 662.8 M18 660 L20.8 662.8" stroke-width="0.8"/>
  </svg>
</div>

<!-- POPUP + ANNOTATION ARROWS -->
<div class="abs" id="popup" style="left:257px;top:210px;width:153px;height:47.5px;background:#f0f0f0;border-radius:2px;box-shadow:0 5px 5px -3px rgba(0,0,0,.2),0 8px 10px 1px rgba(0,0,0,.14),0 3px 14px 2px rgba(0,0,0,.12)"><span class="t" id="pop" style="left:16.2px;top:17.8px;font-size:12px;color:#333;transform:scaleX(1.0271);transform-origin:0 0">Пересчитать цепочку</span></div>
<svg class="abs" id="redarrows" style="left:200px;top:140px;overflow:visible" width="140" height="80" viewBox="200 140 140 80">
  <defs><filter id="ash" x="-20%" y="-20%" width="150%" height="150%"><feGaussianBlur stdDeviation="1.6"/></filter></defs>
  <g transform="translate(4.5,3.5)" filter="url(#ash)" opacity=".55" fill="#222" stroke="#222">
    <path d="M308.4 155 L226 188.5" stroke-width="2.6" fill="none"/><path d="M214.4 194.5 L223.5 182.5 L230 195.5 Z" stroke="none"/>
    <path d="M308.6 154.5 V195" stroke-width="2.6" fill="none"/><path d="M308.9 208 L301.3 193.5 H316.4 Z" stroke="none"/>
  </g>
  <g fill="#c00000" stroke="#c00000">
    <path d="M308.4 155 L226 188.5" stroke-width="2.6" fill="none"/><path d="M214.4 194.5 L223.5 182.5 L230 195.5 Z" stroke="none"/>
    <path d="M308.6 154.5 V195" stroke-width="2.6" fill="none"/><path d="M308.9 208 L301.3 193.5 H316.4 Z" stroke="none"/>
  </g>
</svg>

<!-- HELP -->
<div class="abs" style="left:15px;top:859px;width:24px;height:24px;border-radius:12px;background:#535353"><span class="t" style="left:7.5px;top:5px;font-size:16px;font-weight:bold;color:#fff">?</span></div>

</body>
</html>
